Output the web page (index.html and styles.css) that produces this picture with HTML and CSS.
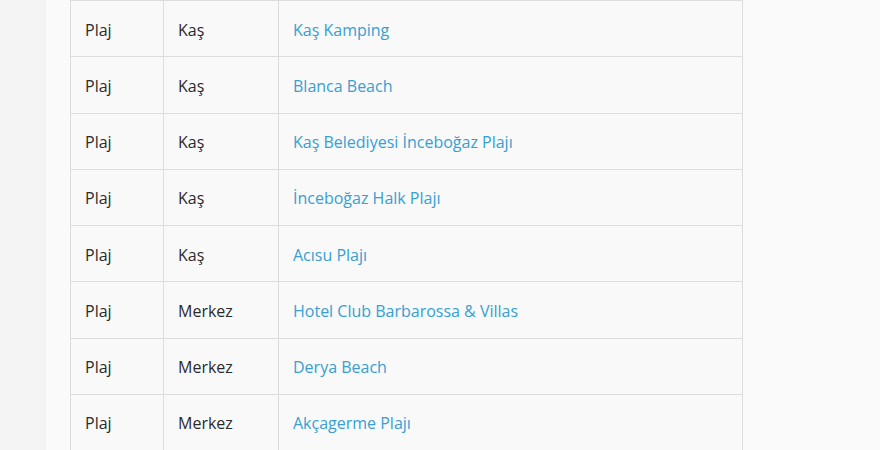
FILE: index.html
```html
<!DOCTYPE html>
<html lang="tr">
<head>
<meta charset="utf-8">
<title>Plajlar</title>
<link rel="stylesheet" href="styles.css">
</head>
<body>
<div class="page">
  <div class="side"></div>
  <main class="main">
    <table class="list">
      <colgroup><col class="c1"><col class="c2"><col class="c3"></colgroup>
      <tbody>
        <tr><td>Plaj</td><td>Kaş</td><td><a href="#">Kaş Kamping</a></td></tr>
        <tr><td>Plaj</td><td>Kaş</td><td><a href="#">Blanca Beach</a></td></tr>
        <tr><td>Plaj</td><td>Kaş</td><td><a href="#">Kaş Belediyesi İnceboğaz Plajı</a></td></tr>
        <tr><td>Plaj</td><td>Kaş</td><td><a href="#">İnceboğaz Halk Plajı</a></td></tr>
        <tr><td>Plaj</td><td>Kaş</td><td><a href="#">Acısu Plajı</a></td></tr>
        <tr><td>Plaj</td><td>Merkez</td><td><a href="#">Hotel Club Barbarossa &amp; Villas</a></td></tr>
        <tr><td>Plaj</td><td>Merkez</td><td><a href="#">Derya Beach</a></td></tr>
        <tr><td>Plaj</td><td>Merkez</td><td><a href="#">Akçagerme Plajı</a></td></tr>
      </tbody>
    </table>
  </main>
</div>
</body>
</html>
```
FILE: styles.css
```css
html, body {
  margin: 0;
  padding: 0;
  height: 100%;
  overflow: hidden;
}
body {
  font-family: "Open Sans", "Noto Sans", sans-serif;
  font-size: 16px;
  color: #2b2b2b;
  background: #f5f5f5;
}
.page {
  display: flex;
  min-height: 100%;
}
.side {
  width: 46px;
  flex: none;
  background: #f4f4f4;
}
.main {
  flex: 1;
  background: #fafafa;
  padding-left: 24px;
}
.list {
  border-collapse: collapse;
  width: 673px;
  table-layout: fixed;
  background: #f9f9f9;
  border: 1px solid #dddddd;
}
.c1 { width: 93px; }
.c2 { width: 115px; }
.c3 { width: auto; }
.list td {
  border: 1px solid #dddddd;
  padding: 2px 14px 0;
  box-sizing: border-box;
  height: 56.28px;
  vertical-align: middle;
  line-height: 20px;
}
.list a {
  color: #379fd2;
  text-decoration: none;
}
```
